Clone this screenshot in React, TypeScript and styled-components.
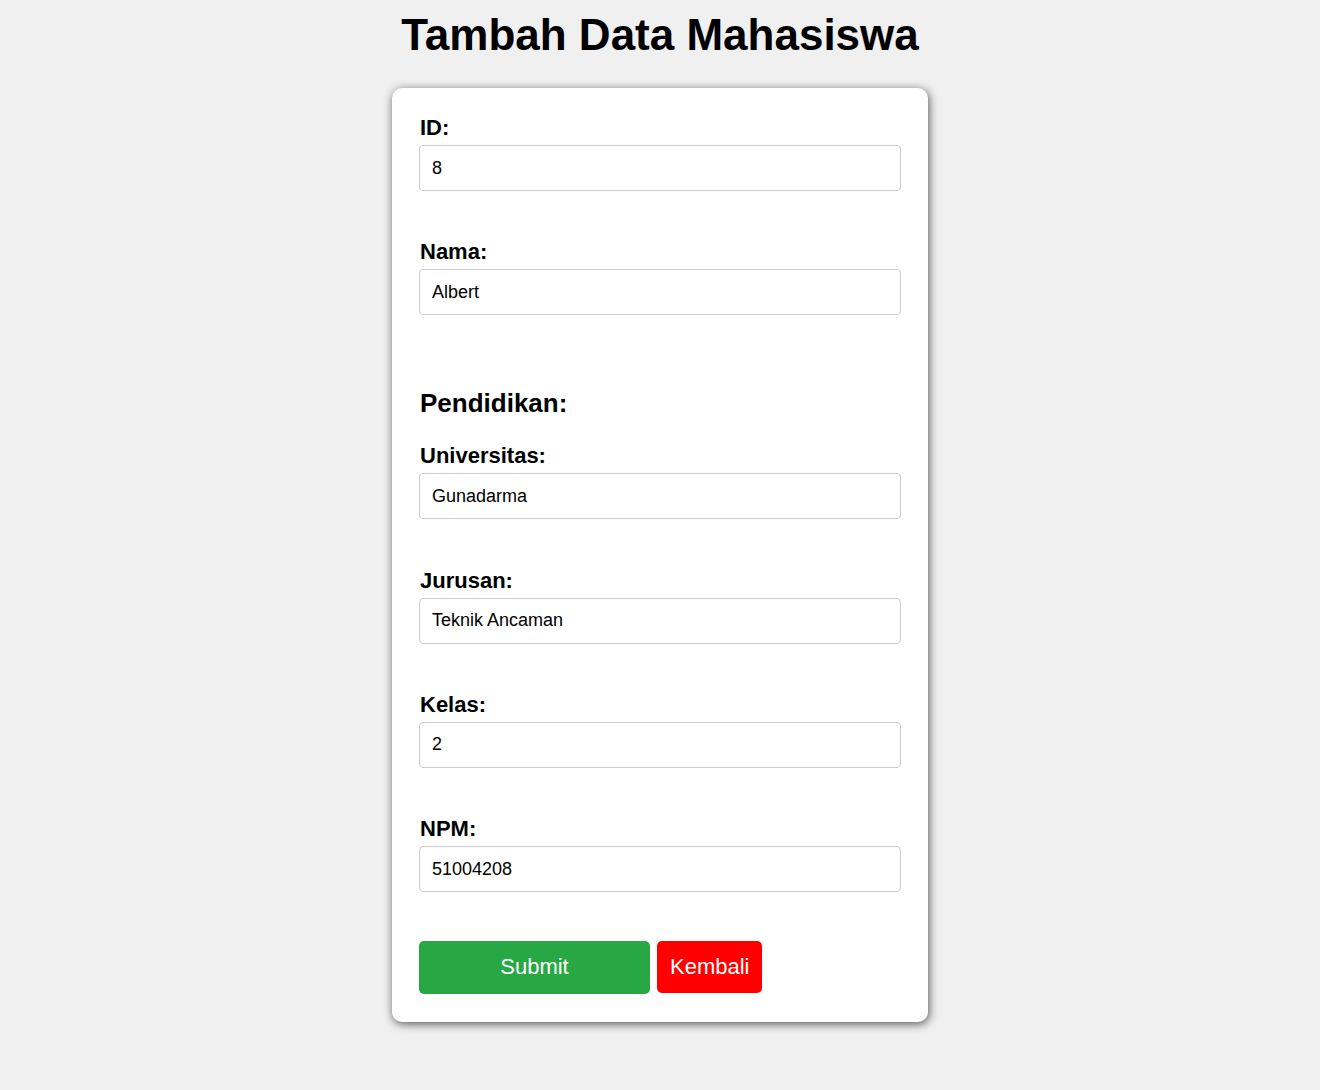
import React from "react";
import styled, { createGlobalStyle } from "styled-components";

const GlobalStyle = createGlobalStyle`
  body {
    margin: 0;
    background: #f0f0f0;
    font-family: "Liberation Sans", Arial, sans-serif;
    color: #000;
  }
`;

const Title = styled.h1`
  margin: 10px 0 28px;
  text-align: center;
  font-size: 44px;
  font-weight: bold;
`;

const Card = styled.form`
  box-sizing: border-box;
  width: 536px;
  margin: 0 auto 68px;
  padding: 27px 27px 28px;
  background: #fff;
  border-radius: 10px;
  box-shadow: 1px 2px 10px rgba(0, 0, 0, 0.65);
`;

const Group = styled.div`
  display: flex;
  flex-direction: column;
  margin-bottom: 48.33px;
`;

const Label = styled.label`
  font-size: 22px;
  line-height: 25px;
  font-weight: bold;
  margin: 0 0 5px 1px;
`;

const Input = styled.input`
  box-sizing: border-box;
  width: 100%;
  height: 46px;
  padding: 0 12px;
  border: 1px solid #ccc;
  border-radius: 4px;
  font-family: "Liberation Sans", Arial, sans-serif;
  font-size: 18px;
  color: #000;
`;

/* group margin (48px) collapses into this top margin */
const Section = styled.h3`
  margin: 73px 0 24px 1px;
  font-size: 26px;
  font-weight: bold;
`;

const Actions = styled.div`
  display: flex;
  align-items: flex-start;
  gap: 7px;
`;

const Button = styled.button<{ $bg: string; $w?: number; $h: number }>`
  box-sizing: border-box;
  height: ${(p) => p.$h}px;
  ${(p) => (p.$w ? `width: ${p.$w}px;` : "padding: 0 13px;")}
  border: none;
  border-radius: 5px;
  background: ${(p) => p.$bg};
  color: #fff;
  font-family: "Liberation Sans", Arial, sans-serif;
  font-size: 22px;
  cursor: pointer;
`;

const Field: React.FC<{ label: string; value: string }> = ({ label, value }) => (
  <Group>
    <Label>{label}</Label>
    <Input defaultValue={value} />
  </Group>
);

const App: React.FC = () => {
  return (
    <>
      <GlobalStyle />
      <Title>Tambah Data Mahasiswa</Title>
      <Card onSubmit={(e) => e.preventDefault()}>
        <Field label="ID:" value="8" />
        <Field label="Nama:" value="Albert" />
        <Section>Pendidikan:</Section>
        <Field label="Universitas:" value="Gunadarma" />
        <Field label="Jurusan:" value="Teknik Ancaman" />
        <Field label="Kelas:" value="2" />
        <Field label="NPM:" value="51004208" />
        <Actions>
          <Button type="submit" $bg="#28a745" $w={231} $h={53}>
            Submit
          </Button>
          <Button type="button" $bg="#ff0000" $h={52}>
            Kembali
          </Button>
        </Actions>
      </Card>
    </>
  );
};

export default App;
